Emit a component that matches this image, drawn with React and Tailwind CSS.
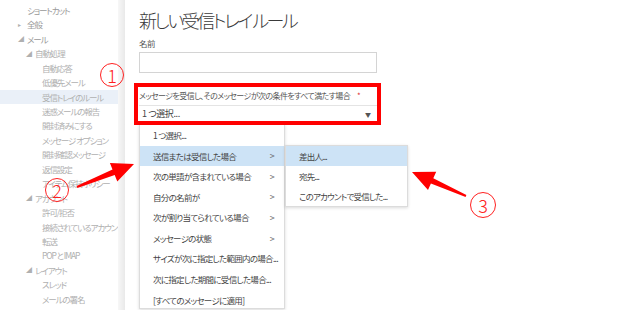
import React from 'react';

const navItems = [
  { label: 'ショートカット', level: 0, tone: 'top' },
  { label: '全般', level: 0, caret: 'closed', tone: 'top' },
  { label: 'メール', level: 0, caret: 'open', tone: 'top' },
  { label: '自動処理', level: 1, caret: 'open' },
  { label: '自動応答', level: 2 },
  { label: '低優先メール', level: 2 },
  { label: '受信トレイのルール', level: 2, selected: true },
  { label: '迷惑メールの報告', level: 2 },
  { label: '開封済みにする', level: 2 },
  { label: 'メッセージ オプション', level: 2 },
  { label: '開封確認メッセージ', level: 2 },
  { label: '返信設定', level: 2 },
  { label: 'アイテム保持ポリシー', level: 2 },
  { label: 'アカウント', level: 1, caret: 'open' },
  { label: '許可/拒否', level: 2 },
  { label: '接続されているアカウント', level: 2 },
  { label: '転送', level: 2 },
  { label: 'POP と IMAP', level: 2 },
  { label: 'レイアウト', level: 1, caret: 'open' },
  { label: 'スレッド', level: 2 },
  { label: 'メールの署名', level: 2 },
];

const menuItems = [
  { label: '1 つ選択...' },
  { label: '送信または受信した場合', sub: true, active: true },
  { label: '次の単語が含まれている場合', sub: true },
  { label: '自分の名前が', sub: true },
  { label: '次が割り当てられている場合', sub: true },
  { label: 'メッセージの状態', sub: true },
  { label: 'サイズが次に指定した範囲内の場合...' },
  { label: '次に指定した期間に受信した場合...' },
  { label: '[すべてのメッセージに適用]' },
];

const subItems = ['差出人...', '宛先...', 'このアカウントで受信した...'];

const NavRow = ({ item }) => {
  const pad = item.level === 0 ? 'pl-[18px]' : item.level === 1 ? 'pl-[26px]' : 'pl-[42px]';
  const color = item.tone === 'top' ? 'text-[#999]' : 'text-[#b0b0b0]';
  return (
    <div className={`h-[14.45px] flex items-center ${pad} ${color} ${item.selected ? 'bg-[#eaf0f8]' : ''}`}>
      {item.caret && (
        <span className="w-[9px] text-[6px] leading-none text-[#b0b0b0]">
          {item.caret === 'open' ? '◢' : '▸'}
        </span>
      )}
      {item.level === 0 && !item.caret && <span className="w-[9px]" />}
      <span className="text-[8.5px] tracking-[-1.1px] leading-none whitespace-nowrap">{item.label}</span>
    </div>
  );
};

const Circled = ({ n, className }) => (
  <div className={`absolute rounded-full border border-[#ff2020] flex items-center justify-center text-[#ff2020] text-[18px] font-light leading-none ${className}`}>
    {n}
  </div>
);

export default function App() {
  return (
    <div className="relative w-[640px] h-[310px] overflow-hidden bg-white flex font-['Noto_Sans_CJK_JP','Liberation_Sans',sans-serif] [font-feature-settings:'palt']">
      {/* sidebar */}
      <aside className="w-[118px] shrink-0 pt-[3px] overflow-hidden">
        {navItems.map((item) => (
          <NavRow key={item.label} item={item} />
        ))}
      </aside>
      <div className="w-[7px] shrink-0 bg-gradient-to-r from-[#f7f7f7] to-[#e9e9e9]" />

      {/* main */}
      <main className="flex-1 pl-[14px] pt-[7px]">
        <h1 className="text-[18px] tracking-[-2.5px] leading-[26px] text-[#3a3a3a] font-light">新しい受信トレイ ルール</h1>
        <div className="mt-[4px] text-[8.5px] tracking-[-0.5px] leading-[12px] text-[#555]">名前</div>
        <div className="mt-[3px] w-[238px] h-[21px] border border-[#d4d4d4]" />
        <div className="mt-[14px] w-[238px]">
          <div className="h-[18px] flex items-center text-[8px] tracking-[-0.6px] text-[#555] whitespace-nowrap">
            メッセージを受信し、そのメッセージが次の条件をすべて満たす場合
            <span className="ml-[7px] text-[#e03030]">*</span>
          </div>
          <div className="h-[17px] border-t border-[#e4e4e4] flex items-center justify-between pl-[3px] pr-[6px] text-[#444]">
            <span className="text-[9px] tracking-[-0.4px]">1 つ選択...</span>
            <span className="text-[6px] text-[#555]">▼</span>
          </div>
        </div>
      </main>

      {/* open dropdown */}
      <div className="absolute left-[139px] top-[124px] w-[146px] h-[185px] bg-white border border-[#dcdcdc] shadow-[0_1px_3px_rgba(0,0,0,0.15)]">
        {menuItems.map((m) => (
          <div
            key={m.label}
            className={`h-[20.6px] flex items-center justify-between pl-[13px] pr-[10px] text-[8.5px] tracking-[-0.7px] text-[#444] whitespace-nowrap ${m.active ? 'bg-[#cde3f6]' : ''}`}
          >
            <span>{m.label}</span>
            {m.sub && <span className="text-[9px] text-[#666]">&gt;</span>}
          </div>
        ))}
      </div>

      {/* submenu */}
      <div className="absolute left-[285px] top-[145px] w-[123px] h-[62px] bg-white border border-[#dcdcdc] shadow-[0_1px_3px_rgba(0,0,0,0.15)]">
        {subItems.map((s, i) => (
          <div
            key={s}
            className={`h-[20px] flex items-center pl-[13px] text-[8.5px] tracking-[-0.8px] text-[#444] whitespace-nowrap ${i === 0 ? 'bg-[#cde3f6]' : ''}`}
          >
            {s}
          </div>
        ))}
      </div>

      {/* annotations */}
      <div className="absolute left-[134px] top-[83px] w-[247px] h-[42px] border-[4px] border-[#ff0000] pointer-events-none" />
      <Circled n="1" className="left-[100px] top-[63px] w-[24px] h-[24px]" />
      <Circled n="2" className="left-[45px] top-[178px] w-[24px] h-[24px]" />
      <Circled n="3" className="left-[470px] top-[192px] w-[26px] h-[26px]" />
      <svg className="absolute inset-0 pointer-events-none" width="640" height="310" viewBox="0 0 640 310">
        <polygon
          fill="#ff0000"
          points="76.6,186.1 112.5,169.4 109.9,162.9 134,164 117.3,181.5 114.7,175.0 77.4,187.9"
        />
        <polygon
          fill="#ff0000"
          points="466.4,195.1 433.3,178.2 436.2,171.8 412,172 428.0,190.0 430.9,183.6 465.6,196.9"
        />
      </svg>
    </div>
  );
}
